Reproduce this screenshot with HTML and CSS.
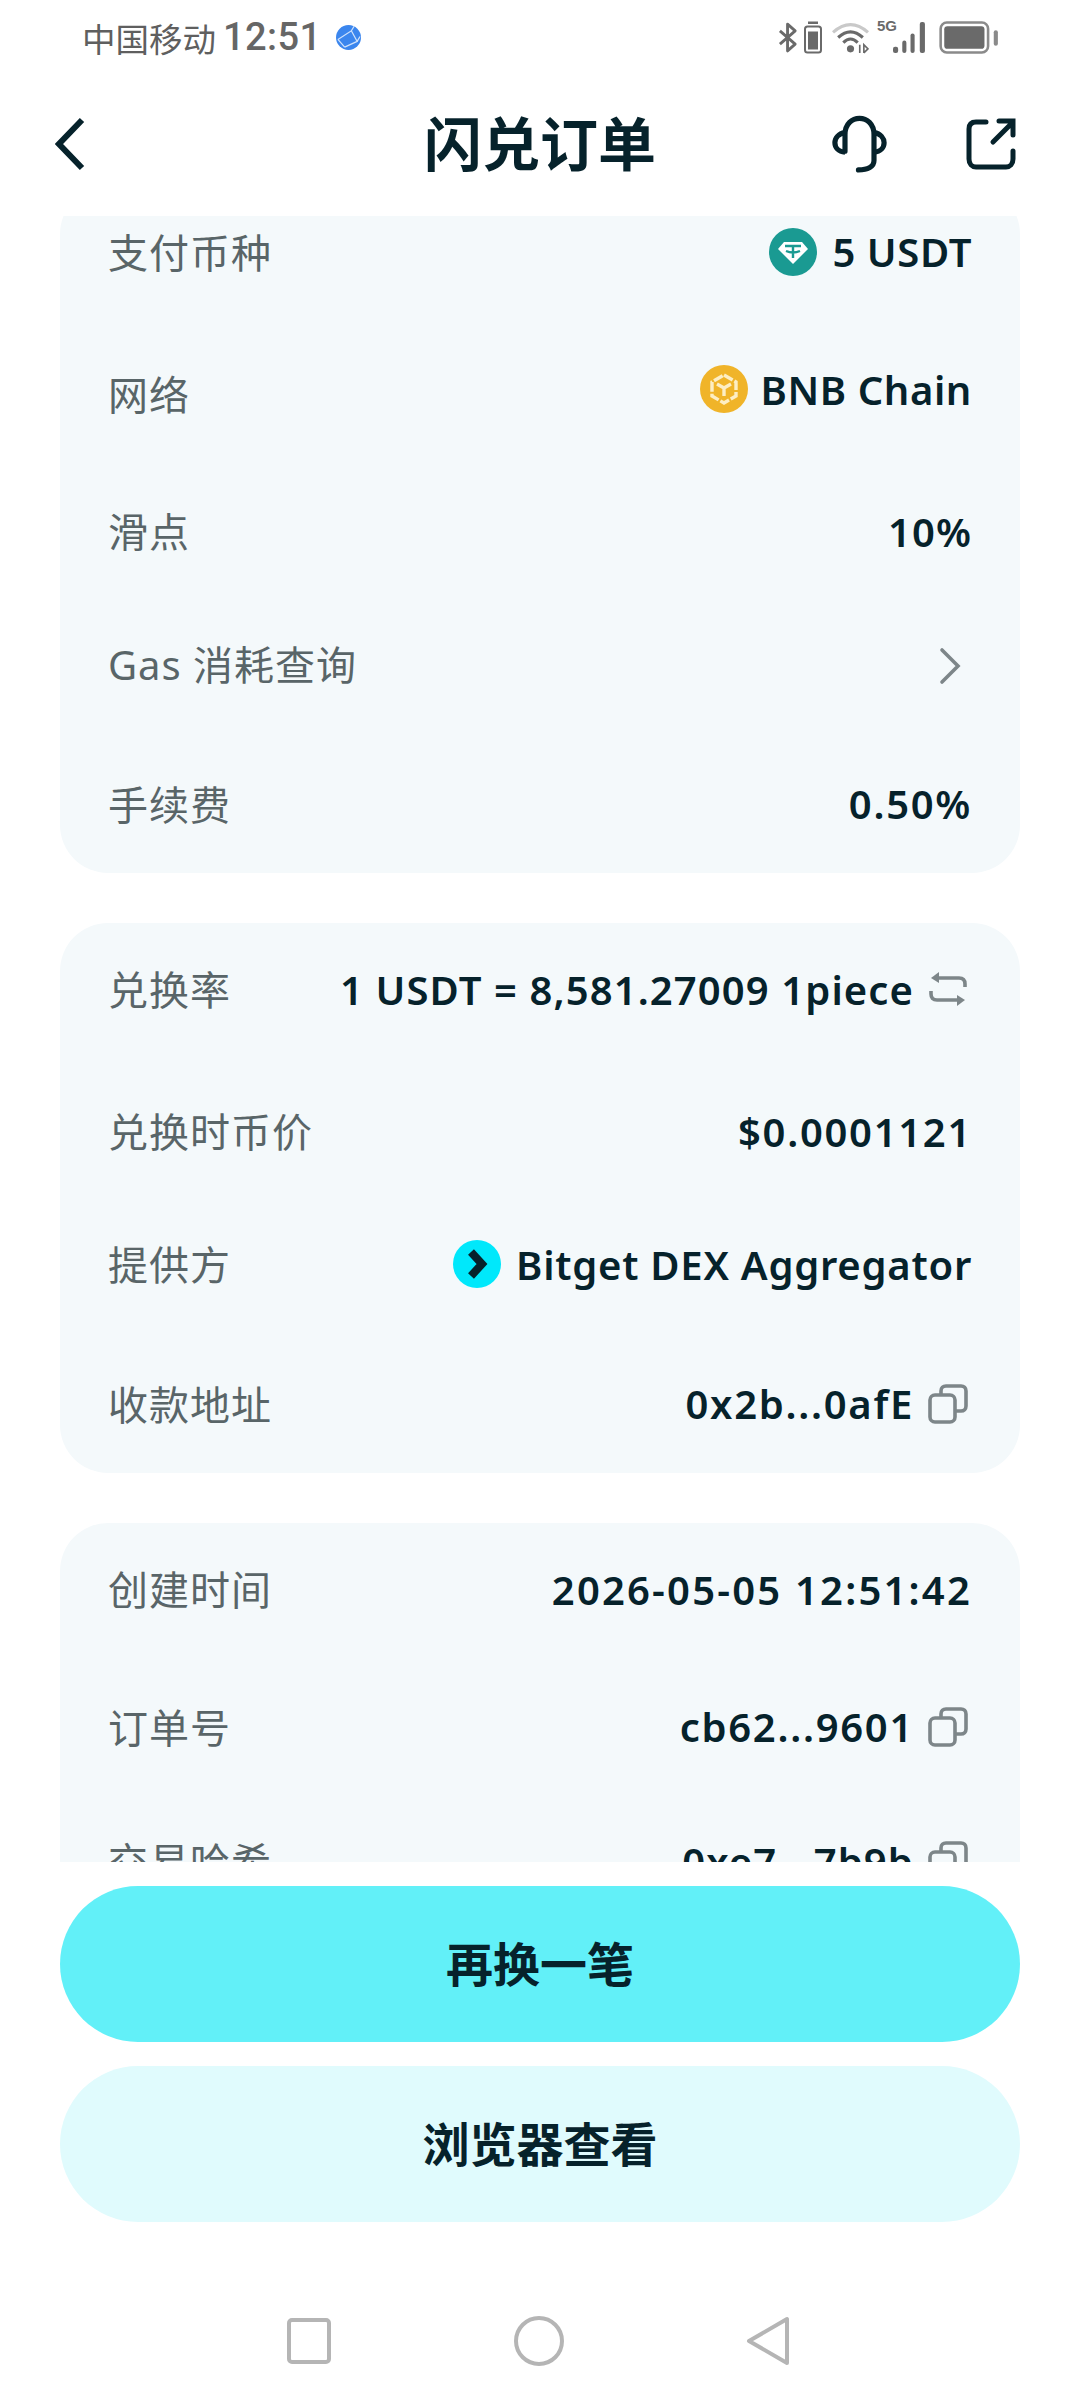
FILE: index.html
```html
<!DOCTYPE html>
<html lang="zh-CN">
<head>
    <meta charset="UTF-8">
    <title>闪兑订单</title>
    <link rel="stylesheet" href="styles.css">
</head>
<body>
<div class="page">
    <!-- Status bar -->
    <div class="status">
        <div class="status-left">
            <span class="carrier">中国移动</span>
            <span class="clock">12:51</span>
            <svg class="globe" viewBox="0 0 26 26">
                <circle cx="13" cy="13" r="13" fill="#3b86ee"/>
                <path d="M2 15 L16 6 L22 17 L9 23 M2 15 L9 23 M16 6 L19 1 M22 17 L25 12" fill="none" stroke="#cfe2fb" stroke-width="1.3"/>
            </svg>
        </div>
        <div class="status-right">
            <svg class="st-bt" viewBox="0 0 22 32">
                <path d="M2 9 L18 23 L10 30 V2 L18 9 L2 23" fill="none" stroke="#6a6a6a" stroke-width="3" stroke-linejoin="round"/>
            </svg>
            <svg class="st-vib" viewBox="0 0 18 32">
                <rect x="4" y="0" width="10" height="2.5" fill="#6a6a6a"/>
                <rect x="1" y="5" width="16" height="26" rx="2.5" fill="none" stroke="#6a6a6a" stroke-width="2"/>
                <rect x="4" y="10" width="10" height="18" fill="#6a6a6a"/>
            </svg>
            <svg class="st-wifi" viewBox="0 0 36 32">
                <path d="M1 11 Q18 -4 35 11" fill="none" stroke="#c9c9c9" stroke-width="3"/>
                <path d="M6 16 Q18 5 30 16 M11 21 Q18 14 25 21" fill="none" stroke="#6a6a6a" stroke-width="3"/>
                <circle cx="18" cy="27" r="3.5" fill="#6a6a6a"/>
                <path d="M27 23 V31 M31 31 V23 L35 27 L31 31" fill="none" stroke="#6a6a6a" stroke-width="1.6"/>
            </svg>
            <div class="st-signal">
                <span class="st-5g">5G</span>
                <svg class="st-bars" viewBox="0 0 33 32">
                    <rect x="0" y="25" width="5" height="6" rx="2" fill="#6a6a6a"/>
                    <rect x="9" y="19" width="4" height="12" rx="2" fill="#6a6a6a"/>
                    <rect x="17" y="12" width="4" height="19" rx="2" fill="#6a6a6a"/>
                    <rect x="26" y="1" width="5" height="30" rx="2" fill="#6a6a6a"/>
                </svg>
            </div>
            <svg class="st-batt" viewBox="0 0 58 32">
                <rect x="1.5" y="1.5" width="46" height="29" rx="6" fill="none" stroke="#8a8a8a" stroke-width="2.5"/>
                <rect x="5" y="5" width="39" height="22" rx="3" fill="#6a6a6a"/>
                <rect x="53" y="9" width="4" height="15" rx="2" fill="#8a8a8a"/>
            </svg>
        </div>
    </div>

    <!-- Title bar -->
    <div class="topbar">
        <svg class="back" viewBox="0 0 30 54">
            <path d="M27 3 L4 27 L27 51" fill="none" stroke="#06222b" stroke-width="6"/>
        </svg>
        <h1 class="title">闪兑订单</h1>
        <div class="top-actions">
            <svg class="headset" viewBox="0 0 54 56">
                <path d="M13 35 V19 C13 -2 41 -2 41 19 V44 C41 50 35 53 26 53" fill="none" stroke="#06222b" stroke-width="5" stroke-linecap="round"/>
                <path d="M13 17 C0 19 0 35 13 36 M41 17 C54 19 54 35 41 36" fill="none" stroke="#06222b" stroke-width="5"/>
            </svg>
            <svg class="share" viewBox="0 0 50 52">
                <path d="M20 4 H10 C5 4 3 7 3 11 V41 C3 46 6 49 10 49 H40 C44 49 47 46 47 41 V33" fill="none" stroke="#06222b" stroke-width="5" stroke-linecap="round"/>
                <path d="M27 24 L46 5 M33 3 H47 V17" fill="none" stroke="#06222b" stroke-width="5" stroke-linecap="round"/>
            </svg>
        </div>
    </div>

    <!-- Scrolled order details -->
    <div class="scroll">
        <div class="scroll-inner">
            <section class="card">
                <div class="row row-up">
                    <span class="label">支付币种</span>
                    <span class="value">
                        <svg class="coin" viewBox="0 0 48 48">
                            <circle cx="24" cy="24" r="24" fill="#1a9a92"/>
                            <path d="M15 14 H33 L39 21 L24 36 L9 21 Z" fill="#fff"/>
                            <path d="M16 18 H32 M24 18 V30 M17 23 Q24 26 31 23" fill="none" stroke="#1a9a92" stroke-width="2.4"/>
                        </svg>
                        5 USDT
                    </span>
                </div>
                <div class="row row-up">
                    <span class="label label-low">网络</span>
                    <span class="value">
                        <svg class="coin coin-bnb" viewBox="0 0 48 48">
                            <circle cx="24" cy="24" r="24" fill="#f0b429"/>
                            <path d="M24 10 L36 17 V31 L24 38 L12 31 V17 Z" fill="none" stroke="#fdeec4" stroke-width="3.4" stroke-dasharray="10 2"/>
                            <path d="M17 19 L24 23 L31 19 M24 23 V31" fill="none" stroke="#fdeec4" stroke-width="3.4"/>
                        </svg>
                        BNB Chain
                    </span>
                </div>
                <div class="row row-down">
                    <span class="label">滑点</span>
                    <span class="value value-rate">10%</span>
                </div>
                <div class="row row-up">
                    <span class="label">Gas 消耗查询</span>
                    <svg class="chevron" viewBox="0 0 22 38">
                        <path d="M3 3 L19 19 L3 35" fill="none" stroke="#7d8689" stroke-width="3.6" stroke-linecap="round"/>
                    </svg>
                </div>
                <div class="row">
                    <span class="label">手续费</span>
                    <span class="value value-num">0.50%</span>
                </div>
            </section>

            <section class="card">
                <div class="row row-up">
                    <span class="label">兑换率</span>
                    <span class="value value-rate">
                        1 USDT = 8,581.27009 1piece
                        <svg class="act" viewBox="0 0 40 36">
                            <path d="M11 1 L3 7 L11 12 Z" fill="#7d8689"/>
                            <path d="M9 7 H31 C35 7 37 9 37 13 V16" fill="none" stroke="#7d8689" stroke-width="3.6"/>
                            <path d="M31 29 H9 C5 29 3 27 3 23 V20" fill="none" stroke="#7d8689" stroke-width="3.6"/>
                            <path d="M29 35 L37 29 L29 24 Z" fill="#7d8689"/>
                        </svg>
                    </span>
                </div>
                <div class="row row-down">
                    <span class="label">兑换时币价</span>
                    <span class="value value-num">$0.0001121</span>
                </div>
                <div class="row row-up">
                    <span class="label">提供方</span>
                    <span class="value value-name">
                        <svg class="coin" viewBox="0 0 48 48">
                            <circle cx="24" cy="24" r="24" fill="#00e8fb"/>
                            <path d="M18 12 L29 24 L18 36" fill="none" stroke="#06222b" stroke-width="8"/>
                        </svg>
                        Bitget DEX Aggregator
                    </span>
                </div>
                <div class="row">
                    <span class="label">收款地址</span>
                    <span class="value value-num">
                        0x2b...0afE
                        <svg class="act" viewBox="0 0 40 40">
                            <use href="#copy-icon"/>
                        </svg>
                    </span>
                </div>
            </section>

            <section class="card">
                <div class="row row-up">
                    <span class="label">创建时间</span>
                    <span class="value value-date">2026-05-05 12:51:42</span>
                </div>
                <div class="row row-up">
                    <span class="label">订单号</span>
                    <span class="value value-num">
                        cb62...9601
                        <svg class="act" viewBox="0 0 40 40">
                            <use href="#copy-icon"/>
                        </svg>
                    </span>
                </div>
                <div class="row row-clipped">
                    <span class="label">交易哈希</span>
                    <span class="value value-rate">
                        0xe7...7b9b
                        <svg class="act" viewBox="0 0 40 40">
                            <use href="#copy-icon"/>
                        </svg>
                    </span>
                </div>
            </section>
        </div>
    </div>

    <!-- Bottom buttons -->
    <div class="actions">
        <button class="btn btn-main">再换一笔</button>
        <button class="btn btn-soft">浏览器查看</button>
    </div>

    <!-- Android navigation -->
    <div class="navbar">
        <svg class="nav-square" viewBox="0 0 44 46">
            <rect x="2" y="2" width="40" height="42" rx="3" fill="none" stroke="#b5b5b5" stroke-width="4"/>
        </svg>
        <svg class="nav-circle" viewBox="0 0 50 50">
            <circle cx="25" cy="25" r="23" fill="none" stroke="#b5b5b5" stroke-width="4"/>
        </svg>
        <svg class="nav-back" viewBox="0 0 44 50">
            <path d="M41 3 V47 L3 25 Z" fill="none" stroke="#b5b5b5" stroke-width="4" stroke-linejoin="round"/>
        </svg>
    </div>
</div>

<svg class="defs" width="0" height="0">
    <defs>
        <g id="copy-icon" fill="none" stroke="#7d8689" stroke-width="3.6">
            <rect x="2" y="11" width="25" height="27" rx="5"/>
            <path d="M13 11 V7 C13 4 15 2 18 2 H33 C36 2 38 4 38 7 V22 C38 25 36 27 33 27 H27"/>
        </g>
    </defs>
</svg>
</body>
</html>
```

FILE: styles.css
```css
* {
    box-sizing: border-box;
}

body {
    margin: 0;
    background: #fff;
    font-family: "Noto Sans", "Noto Sans CJK SC", sans-serif;
    color: #06222b;
}

.page {
    width: 1080px;
    height: 2400px;
    display: flex;
    flex-direction: column;
    overflow: hidden;
}

/* Status bar */
.status {
    height: 74px;
    padding: 0 81px 0 82px;
    display: flex;
    justify-content: space-between;
    align-items: center;
}

.status-left {
    display: flex;
    align-items: center;
}

.carrier {
    font-size: 33.5px;
    color: #5f5f5f;
}

.clock {
    margin-left: 7px;
    font-family: Roboto, sans-serif;
    font-weight: 500;
    font-size: 38px;
    letter-spacing: 0.4px;
    color: #666;
}

.globe {
    width: 25px;
    height: 25px;
    margin-left: 15px;
}

.status-right {
    display: flex;
    align-items: center;
}

.st-bt {
    width: 21px;
    height: 33px;
}

.st-vib {
    width: 18px;
    height: 33px;
    margin-left: 5px;
}

.st-wifi {
    width: 37px;
    height: 33px;
    margin-left: 10px;
}

.st-signal {
    width: 50px;
    height: 33px;
    margin-left: 8px;
    position: relative;
}

.st-5g {
    position: absolute;
    left: 0;
    top: -4px;
    font-family: "Liberation Sans", sans-serif;
    font-weight: 700;
    font-size: 15px;
    color: #6a6a6a;
}

.st-bars {
    position: absolute;
    right: 0;
    top: 0;
    width: 34px;
    height: 33px;
}

.st-batt {
    width: 60px;
    height: 33px;
    margin-left: 12px;
}

/* Title bar */
.topbar {
    height: 142px;
    padding: 0 64px 2px 55px;
    position: relative;
    display: flex;
    justify-content: space-between;
    align-items: center;
}

.back {
    width: 30px;
    height: 54px;
}

.title {
    position: absolute;
    left: 0;
    right: 0;
    margin: 0 0 6px;
    text-align: center;
    font-size: 58px;
    font-weight: 700;
}

.top-actions {
    display: flex;
    align-items: center;
    gap: 78px;
}

.headset {
    width: 57px;
    height: 58px;
}

.share {
    width: 50px;
    height: 52px;
}

/* Scrolling area */
.scroll {
    height: 1646px;
    overflow: hidden;
}

.scroll-inner {
    margin-top: -30.5px;
    padding: 0 60px;
    display: flex;
    flex-direction: column;
    gap: 50px;
}

.card {
    background: #f4f9fb;
    border-radius: 48px;
    padding: 0 48px;
}

.row {
    height: 137.5px;
    padding-bottom: 3px;
    display: flex;
    justify-content: space-between;
    align-items: center;
}

.row-up {
    padding-bottom: 7px;
}

.row-down {
    padding-top: 2px;
    padding-bottom: 0;
}

.row-clipped {
    padding-bottom: 13px;
}

.label {
    font-size: 40px;
    letter-spacing: 1px;
    color: #596568;
}

.label-low {
    margin-top: 10px;
}

.value {
    display: flex;
    align-items: center;
    gap: 15px;
    padding-top: 2px;
    font-size: 40px;
    font-weight: 600;
    letter-spacing: 0.6px;
    white-space: nowrap;
}

/* digits in the reference run wider than Noto Sans */
.value-name {
    letter-spacing: 0.75px;
}

.value-rate {
    letter-spacing: 1.1px;
}

.value-num {
    letter-spacing: 1.7px;
}

.value-date {
    letter-spacing: 2.2px;
}

.coin {
    width: 48px;
    height: 48px;
}

.coin-bnb {
    margin-right: -3px;
}

.act {
    width: 40px;
    height: 40px;
    margin-left: -1px;
    margin-right: 4px;
}

.chevron {
    width: 22px;
    height: 38px;
    margin-top: 5px;
    margin-right: 11px;
}

/* Bottom buttons */
.actions {
    padding: 24px 60px 0;
    display: flex;
    flex-direction: column;
    gap: 24px;
}

.btn {
    height: 156px;
    padding: 0 0 6px;
    border: none;
    border-radius: 78px;
    font-family: "Noto Sans CJK SC", sans-serif;
    font-size: 47px;
    font-weight: 700;
    color: #06222b;
}

.btn-main {
    background: #62f0f8;
}

.btn-soft {
    background: #e0fbfd;
}

/* Navigation */
.navbar {
    margin-top: 94px;
    padding: 0 290px 0 287px;
    display: flex;
    justify-content: space-between;
    align-items: center;
}

.nav-square {
    width: 44px;
    height: 46px;
}

.nav-circle {
    width: 50px;
    height: 50px;
}

.nav-back {
    width: 44px;
    height: 50px;
}

.defs {
    position: absolute;
}
```
